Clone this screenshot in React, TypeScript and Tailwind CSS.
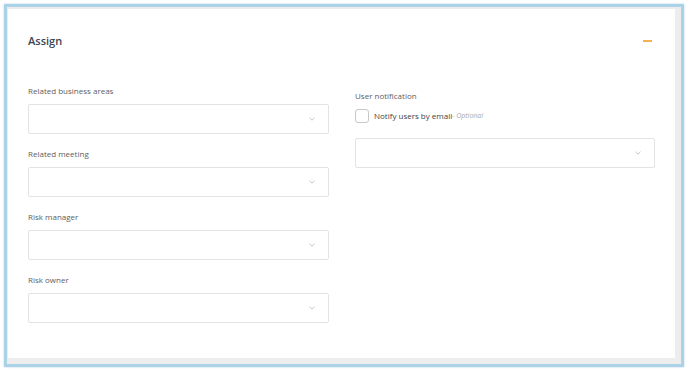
const font = { fontFamily: '"Open Sans", "Noto Sans", sans-serif' };

function Chevron() {
  return (
    <svg width="6" height="4" viewBox="0 0 6 4" fill="none" className="shrink-0">
      <path d="M0.5 0.8L3 3.2L5.5 0.8" stroke="#bdbdbd" strokeWidth="0.9" />
    </svg>
  );
}

function SelectBox() {
  return (
    <div className="flex h-[30px] items-center justify-end rounded-[2px] border border-[#e3e3e3] bg-white pr-[13px]">
      <Chevron />
    </div>
  );
}

function Field({ label }: { label: string }) {
  return (
    <div className="flex flex-col">
      <label className="mb-[7px] text-[8px] leading-[12px] text-[#5e5e5e]">{label}</label>
      <SelectBox />
    </div>
  );
}

export default function App() {
  return (
    <div className="h-[372px] w-[688px] bg-white pl-[4px] pt-[4px]" style={font}>
      <div className="flex h-[363px] w-[680px] border-[3px] border-[#acd2e8] bg-[#ededed] pb-[6px] pl-px pr-[6px] pt-[2px] shadow-[0_0_2px_#b5d6ea]">
        <div className="flex flex-1 flex-col bg-white px-[20px] pt-[24px]">
          <div className="flex h-[16px] items-center justify-between">
            <h2 className="text-[11px] font-semibold leading-[16px] text-[#3b4553]">Assign</h2>
            <span className="mr-[3px] h-[2px] w-[9px] bg-[#f5b350]" />
          </div>

          <div className="mt-[36px] grid grid-cols-[301px_300px] gap-x-[26px]">
            <div className="flex flex-col gap-[14px]">
              <Field label="Related business areas" />
              <Field label="Related meeting" />
              <Field label="Risk manager" />
              <Field label="Risk owner" />
            </div>

            <div className="flex flex-col pt-[5px]">
              <span className="text-[8px] leading-[12px] text-[#5e5e5e]">User notification</span>
              <div className="mt-[7px] flex items-center">
                <span className="h-[14px] w-[14px] rounded-[3px] border border-[#c8c8c8] bg-white" />
                <span className="ml-[5px] text-[8px] text-[#444]">Notify users by email</span>
                <span className="text-[7px] italic text-[#aaa]">- Optional</span>
              </div>
              <div className="mt-[15px]">
                <SelectBox />
              </div>
            </div>
          </div>
        </div>
      </div>
    </div>
  );
}
